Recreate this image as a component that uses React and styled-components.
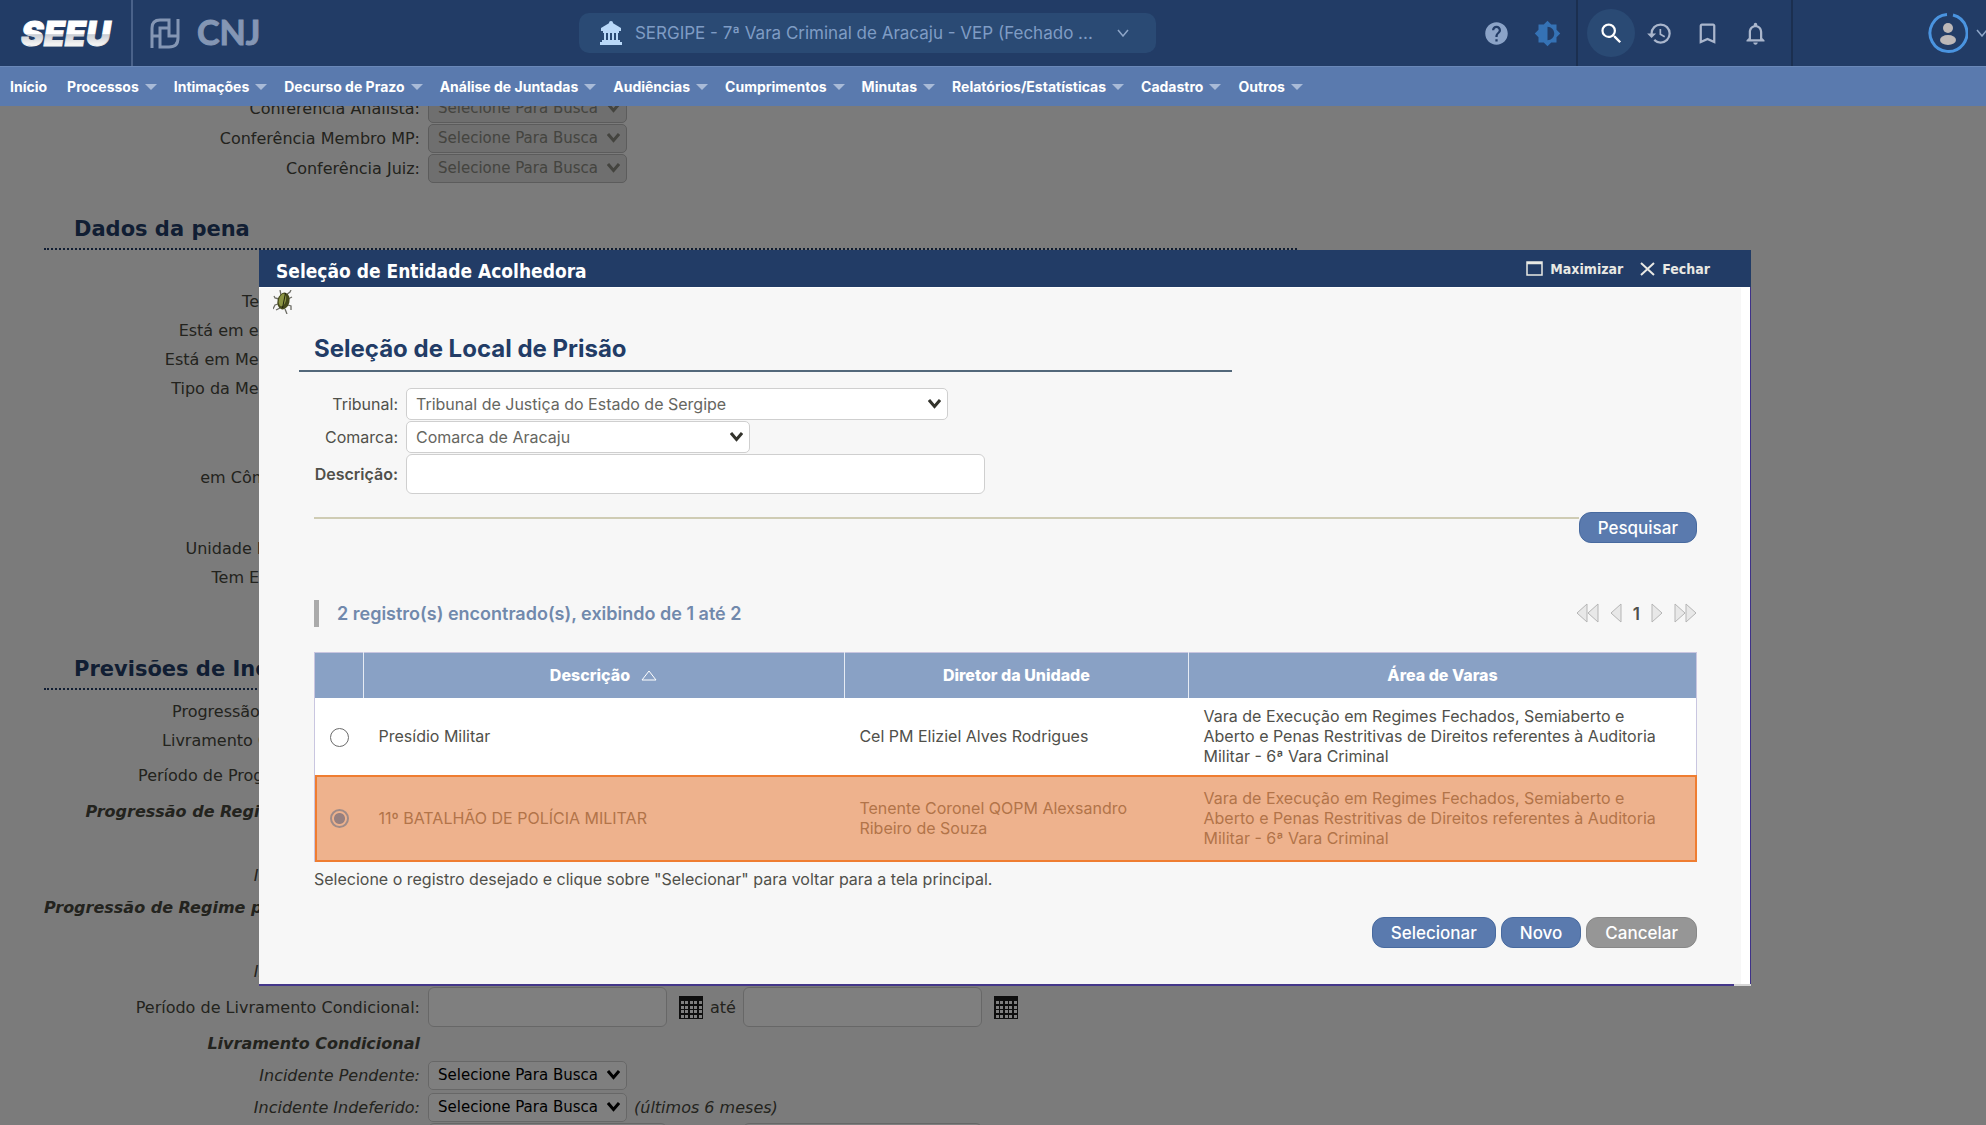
import React from "react"
import styled, { createGlobalStyle } from "styled-components"
import { MdHelp, MdBrightness6, MdSearch, MdHistory, MdBookmarkBorder, MdNotificationsNone } from "react-icons/md"

const GlobalStyle = createGlobalStyle`
    *, *::before, *::after { box-sizing: border-box; }
    html, body, #root { height: 100%; }
    body {
        margin: 0;
        overflow: hidden;
        background: #f7f7f7;
        color: #46463c;
        font-family: Verdana, "DejaVu Sans", sans-serif;
        font-size: 16px;
    }
    button { font-family: inherit; cursor: pointer; }
`

/* ---------- top bar ---------- */

const Header = styled.header`
    position: fixed;
    top: 0;
    left: 0;
    right: 0;
    z-index: 3;
    font-family: Inter, sans-serif;
`

const TopBar = styled.div`
    display: flex;
    align-items: stretch;
    justify-content: space-between;
    height: 66px;
    background: #223c66;
    overflow: hidden;
`

const Brand = styled.div`
    display: flex;
    align-items: center;
    width: 29%;
`

const SeeuBox = styled.a`
    display: flex;
    align-items: center;
    align-self: stretch;
    width: 133px;
    padding-left: 20px;
    border-right: 2px solid #4a628a;
`

const CnjBox = styled.a`
    display: flex;
    align-items: center;
    gap: 17px;
    padding-left: 17px;
`

const CourtButton = styled.button`
    display: flex;
    align-items: center;
    align-self: center;
    width: 577px;
    height: 40px;
    margin-left: 3px;
    padding: 0 20px;
    border: 0;
    border-radius: 10px;
    background: #2a4a74;
    color: #7f9cc4;
    font-size: 17px;

    span { margin: 0 24px 0 12px; white-space: nowrap; }
`

const Tools = styled.div`
    display: flex;
    align-items: stretch;
    justify-content: flex-end;
    flex: 1;
`

const ToolGroup = styled.div`
    display: flex;
    align-items: center;
    gap: ${p => p.$gap || 0}px;
    padding: ${p => p.$pad || "0"};
    border-right: 2px solid #1b2f50;
`

const IconButton = styled.button`
    display: flex;
    align-items: center;
    justify-content: center;
    width: 48px;
    height: 48px;
    padding: 0;
    border: 0;
    border-radius: 50%;
    background: ${p => (p.$active ? "#2a4a74" : "transparent")};
    color: ${p => p.$color || "#aab6cc"};
    font-size: 27px;
`

const UserBox = styled.button`
    display: flex;
    align-items: center;
    gap: 8px;
    width: 193px;
    padding: 0 0 0 135px;
    border: 0;
    background: transparent;

    svg { flex: none; }
`

const Menu = styled.nav`
    display: flex;
    align-items: center;
    gap: 17px;
    height: 40px;
    padding: 0 10px;
    background: #5a7aae;
    border-top: 1px solid #6a88b8;
`

const MenuLink = styled.a`
    display: flex;
    align-items: center;
    gap: 6px;
    color: #fff;
    font-size: 14px;
    font-weight: 700;
    text-decoration: none;
    white-space: nowrap;

    &:first-child { margin-right: 3px; }
`

const Caret = styled.span`
    border: 6px solid transparent;
    border-top-color: #a9bbd8;
    border-bottom: 0;
`

/* ---------- page form ---------- */

const Page = styled.main`
    padding: 93px 44px 0;
`

const SectionTitle = styled.h2`
    width: 66%;
    margin: ${p => p.$space};
    padding: 0 0 2px 30px;
    border-bottom: 2px dotted #223c66;
    color: #223c66;
    font-size: 21px;
    line-height: 34px;
`

const FormRow = styled.div`
    display: grid;
    grid-template-columns: 376px 1fr;
    align-items: center;
    column-gap: 8px;
    height: ${p => p.$height || 29}px;
    margin-top: ${p => p.$top || 0}px;
    font-style: ${p => (p.$italic ? "italic" : "normal")};
`

const FormLabel = styled.label`
    text-align: right;
    white-space: nowrap;
`

const Subtitle = styled.strong`
    text-align: right;
    white-space: nowrap;
`

const Controls = styled.div`
    display: flex;
    align-items: center;
    gap: 7px;
    font-size: 16px;
`

const SelectBox = styled.span`
    position: relative;
    display: inline-flex;
    width: ${p => p.$width || 199}px;

    svg {
        position: absolute;
        top: 50%;
        right: 7px;
        margin-top: -5px;
        color: ${p => (p.$disabled ? "#88887e" : p.$ink || "#000")};
        pointer-events: none;
    }
`

const SmallSelect = styled.select`
    appearance: none;
    width: 100%;
    height: 29px;
    padding: 0 9px;
    border: 1px solid #cfcfcf;
    border-radius: 5px;
    background: #fff;
    color: #000;
    font-family: Verdana, "DejaVu Sans", sans-serif;
    font-size: 15px;
    opacity: 1;

    &:disabled { background: #dedede; border-color: #b8b8b8; color: #88887e; }
`

const DateInput = styled.input`
    width: 239px;
    height: 40px;
    border: 1px solid #cfcfcf;
    border-radius: 6px;
    background: #fff;
`

const DateButton = styled.button`
    display: flex;
    padding: 0 0 0 5px;
    border: 0;
    background: transparent;
`

const Overlay = styled.div`
    position: fixed;
    inset: 0;
    z-index: 2;
    background: rgba(0, 0, 0, 0.5);
`

/* ---------- dialog ---------- */

const Dialog = styled.section`
    position: fixed;
    top: 250px;
    left: 259px;
    right: 235px;
    z-index: 4;
    background: #fff;
    color: #50504a;
    font-family: Inter, sans-serif;
    font-size: 16px;
`

const TitleBar = styled.div`
    display: flex;
    align-items: center;
    justify-content: space-between;
    height: 37px;
    padding: 0 41px 0 17px;
    background: #223c66;
    color: #fff;
    font-family: "DejaVu Sans Condensed", "DejaVu Sans", sans-serif;

    h1 { margin: 5px 0 0; font-size: 19px; font-weight: 700; }
`

const WindowActions = styled.div`
    display: flex;
    gap: 17px;

    button {
        display: flex;
        align-items: center;
        gap: 7px;
        padding: 0;
        border: 0;
        background: transparent;
        color: #e9e9e4;
        font-size: 14px;
        font-weight: 700;
    }
`

const Frame = styled.div`
    padding-right: 9px;
    border-right: 1px solid #3f3188;
    border-bottom: 2px solid #44378a;
`

const Body = styled.div`
    padding: 2px 44px 36px 14px;
    border-top: 1px solid #fff;
    background: #f7f7f7;
`

const Corner = styled.span`
    position: absolute;
    right: 0;
    bottom: 0;
    width: 17px;
    height: 2px;
    background: #d6d6d6;
`

const DialogTitle = styled.h2`
    width: 65.5%;
    margin: 14px 0 16px 26px;
    padding: 0 0 4px 15px;
    border-bottom: 2px solid #53687a;
    color: #223c66;
    font-size: 24px;
    font-weight: 700;
    line-height: 34px;
`

const Content = styled.div`
    padding-left: 41px;
`

const SearchForm = styled.form`
    display: grid;
    grid-template-columns: 84px 1fr;
    align-items: center;
    gap: 1px 8px;

    label { text-align: right; }
`

const RequiredLabel = styled.label`
    font-weight: 600;
`

const LargeSelect = styled(SmallSelect)`
    height: 32px;
    color: #66665f;
    font-family: Inter, sans-serif;
    font-size: 16px;
`

const TextInput = styled.input`
    width: 579px;
    height: 40px;
    border: 1px solid #cfcfcf;
    border-radius: 6px;
    background: #fff;
`

const SearchBar = styled.div`
    display: flex;
    margin-top: 18px;
`

const Rule = styled.hr`
    flex: 1;
    height: 2px;
    margin: 5px 0 0;
    border: 0;
    background: #cfccb4;
`

const Button = styled.button`
    height: 31px;
    padding: 0 18px;
    border: 1px solid ${p => (p.$muted ? "#888" : "#486a9f")};
    border-radius: 12px;
    background: ${p => (p.$muted ? "#969696" : "#5a7aae")};
    color: #fff;
    font-size: 17px;
    font-weight: 500;
`

const ResultBar = styled.div`
    display: flex;
    align-items: center;
    justify-content: space-between;
    margin: 57px 0 25px;
`

const ResultCount = styled.p`
    margin: 0;
    padding-left: 18px;
    border-left: 5px solid #aaa;
    color: #7189ac;
    font-size: 18px;
    font-weight: 600;
    line-height: 27px;
`

const Pager = styled.div`
    display: flex;
    align-items: center;
    gap: 11px;
    font-size: 17px;
    font-weight: 600;

    button { display: flex; padding: 0; border: 0; background: transparent; }
`

const Table = styled.table`
    width: 100%;
    border-collapse: collapse;
    table-layout: fixed;
    line-height: 20px;
    border: 1px solid #c9c6e0;

    th {
        height: 45px;
        padding: 0;
        border-left: 1px solid #e6ebf4;
        background: #89a1c5;
        color: #fff;
        font-size: 16px;
        font-weight: 800;
    }
    th:first-child { border-left: 0; }
    th svg { margin-left: 10px; }
    td { padding: 0 30px 0 15px; }
    td:first-child { padding: 0; text-align: center; }
`

const ResultRow = styled.tr`
    height: ${p => (p.$selected ? 87 : 77)}px;
    background: ${p => (p.$selected ? "#eeb28d" : "#fff")};
    color: ${p => (p.$selected ? "#b27449" : "#50504a")};
    outline: ${p => (p.$selected ? "2px solid #ef7d31" : "none")};
    outline-offset: -2px;
`

const Radio = styled.input`
    appearance: none;
    width: 19px;
    height: 19px;
    margin: 0;
    border: 1px solid #6b6b6b;
    border-radius: 50%;
    background: #fff;
    vertical-align: middle;

    &:checked {
        border: 2px solid #a08b87;
        background: radial-gradient(circle, #97807f 5px, #eeb28d 6px);
    }
`

const Hint = styled.p`
    margin: 7px 0 0;
    line-height: 20px;
`

const Actions = styled.div`
    display: flex;
    justify-content: flex-end;
    gap: 5px;
    margin-top: 28px;
`

/* ---------- drawings ---------- */

const SeeuLogo = () => (
    <svg width="96" height="40" viewBox="0 0 96 40" role="img" aria-label="SEEU">
        <defs>
            <linearGradient id="seeu" x1="0" y1="0" x2="0" y2="1">
                <stop offset="0.5" stopColor="#ffffff" />
                <stop offset="0.53" stopColor="#c9cdd4" />
                <stop offset="0.75" stopColor="#f2f2f2" />
            </linearGradient>
        </defs>
        <text x="1" y="33" fontFamily="Inter, sans-serif" fontSize="34" fontWeight="900" fontStyle="italic"
            fill="url(#seeu)" stroke="url(#seeu)" strokeWidth="1">SEEU</text>
    </svg>
)

const CnjMark = () => (
    <svg width="30" height="31" viewBox="0 0 30 31" fill="none" stroke="#8496b4" strokeWidth="3">
        <path d="M2 30V10Q2 2 10 2H19V18H28" />
        <path d="M2 18H10M19 10H10V29H19Q28 29 28 20V1" />
    </svg>
)

const CnjText = () => (
    <svg width="70" height="46" viewBox="0 0 70 46" role="img" aria-label="CNJ">
        <text x="0" y="35" fontFamily="Lato, sans-serif" fontSize="34" fontWeight="700" fill="#8496b4"
            stroke="#8496b4" strokeWidth="1">CNJ</text>
    </svg>
)

const CourtIcon = () => (
    <svg width="24" height="24" viewBox="0 0 24 24" fill="#b9d8f8">
        <path d="M12 1L22 7V10H2V7Z" />
        <path d="M4 10H20V12H4ZM5 12H7V20H5ZM9 12H11V20H9ZM13 12H15V20H13ZM17 12H19V20H17ZM3 19H21V21H3ZM1 21H23V24H1Z" />
        <circle cx="12" cy="2" r="2" />
    </svg>
)

const Chevron = () => (
    <svg width="12" height="8" viewBox="0 0 12 8" fill="none" stroke="#8ea6c8" strokeWidth="1.5">
        <path d="M1 1L6 7L11 1" />
    </svg>
)

const SelectArrow = () => (
    <svg width="13" height="10" viewBox="0 0 13 10" fill="none" stroke="currentColor" strokeWidth="3">
        <path d="M1 1L6.500 7.500L12 1" />
    </svg>
)

const UserIcon = () => (
    <svg width="40" height="40" viewBox="0 0 40 40">
        <path d="M25 2A18.500 18.500 0 1 1 19 1.500" fill="none" stroke="#4a94e0" strokeWidth="3" />
        <circle cx="20" cy="15" r="5" fill="#bdb8b8" />
        <ellipse cx="20" cy="27" rx="8" ry="5" fill="#bdb8b8" />
    </svg>
)

const CalendarIcon = () => (
    <svg width="24" height="23" viewBox="0 0 24 23">
        <rect width="24" height="23" fill="#1c1c1c" />
        {[5, 10, 14, 19].map(y =>
            [2, 6, 11, 15, 20].map(x => <rect key={`${x}-${y}`} x={x} y={y} width="3" height="3" fill="#fff" />)
        )}
    </svg>
)

const BugIcon = () => (
    <svg width="20" height="24" viewBox="0 0 20 24" fill="none">
        <path d="M8 5L7 0M13 5L17 2L18 0M6 9L2 8L1 6M15 9L19 7M5 14L2 15L0 19M15 15L18 16L18 20M12 19L14 24M7 18L3 20"
            stroke="#6d6d66" strokeWidth="1.3" />
        <ellipse cx="10.500" cy="11" rx="6" ry="8.500" transform="rotate(14 10.500 11)" fill="#45491c" />
        <ellipse cx="9.500" cy="10" rx="3.500" ry="6.500" transform="rotate(14 9.500 10)" fill="#8b9443" />
        <path d="M12.500 3L9.500 18" stroke="#20230c" />
    </svg>
)

const Arrows = ({ count = 1, flip }) => (
    <svg width={count * 11 + 1} height="22" viewBox={`0 0 ${count * 11 + 1} 22`} fill="#e8e8e8" stroke="#b5b5b5">
        {[...Array(count)].map((_, i) => (
            <path key={i} d={flip ? `M${i * 11 + 1} 1V19L${i * 11 + 11} 10Z` : `M${i * 11 + 11} 1V19L${i * 11 + 1} 10Z`} />
        ))}
    </svg>
)

/* ---------- data ---------- */

const menu = ["Processos", "Intimações", "Decurso de Prazo", "Análise de Juntadas", "Audiências", "Cumprimentos",
    "Minutas", "Relatórios/Estatísticas", "Cadastro", "Outros"]

const area = "Vara de Execução em Regimes Fechados, Semiaberto e Aberto e Penas Restritivas de Direitos referentes à Auditoria Militar - 6ª Vara Criminal"

const results = [
    { name: "Presídio Militar", director: "Cel PM Eliziel Alves Rodrigues", area },
    { name: "11º BATALHÃO DE POLÍCIA MILITAR", director: "Tenente Coronel QOPM Alexsandro Ribeiro de Souza", area },
]

/* ---------- pieces ---------- */

const SelectRow = ({ id, label, disabled, top, height, italic, note }) => (
    <FormRow $top={top} $height={height} $italic={italic}>
        <FormLabel htmlFor={id}>{label}</FormLabel>
        <Controls>
            <SelectBox $disabled={disabled}>
                <SmallSelect id={id} disabled={disabled}>
                    <option>Selecione Para Busca</option>
                </SmallSelect>
                <SelectArrow />
            </SelectBox>
            {note}
        </Controls>
    </FormRow>
)

const PeriodRow = ({ id, label }) => (
    <FormRow $height={40}>
        <FormLabel htmlFor={id}>{label}</FormLabel>
        <Controls>
            <DateInput id={id} type="text" />
            <DateButton type="button" aria-label="Data inicial"><CalendarIcon /></DateButton>
            <span>até</span>
            <DateInput type="text" aria-label="Data final" />
            <DateButton type="button" aria-label="Data final"><CalendarIcon /></DateButton>
        </Controls>
    </FormRow>
)

const Incidents = ({ id, title }) => (
    <>
        <FormRow $height={32} $italic><Subtitle>{title}</Subtitle></FormRow>
        <SelectRow id={`${id}-pendente`} label="Incidente Pendente:" height={32} italic />
        <SelectRow id={`${id}-indeferido`} label="Incidente Indeferido:" height={32} italic note="(últimos 6 meses)" />
    </>
)

const App = () => (
    <>
        <GlobalStyle />
        <Header>
            <TopBar>
                <Brand>
                    <SeeuBox href="#"><SeeuLogo /></SeeuBox>
                    <CnjBox href="#"><CnjMark /><CnjText /></CnjBox>
                </Brand>
                <CourtButton type="button">
                    <CourtIcon />
                    <span>SERGIPE - 7ª Vara Criminal de Aracaju - VEP (Fechado ...</span>
                    <Chevron />
                </CourtButton>
                <Tools>
                    <ToolGroup $gap={3} $pad="0 5px 0 0">
                        <IconButton aria-label="Ajuda" $color="#8ba3c7"><MdHelp /></IconButton>
                        <IconButton aria-label="Contraste" $color="#3572b5"><MdBrightness6 /></IconButton>
                    </ToolGroup>
                    <ToolGroup $pad="0 12px 0 9px">
                        <IconButton aria-label="Pesquisar" $active $color="#fff"><MdSearch /></IconButton>
                        <IconButton aria-label="Histórico"><MdHistory /></IconButton>
                        <IconButton aria-label="Favoritos"><MdBookmarkBorder /></IconButton>
                        <IconButton aria-label="Notificações"><MdNotificationsNone /></IconButton>
                    </ToolGroup>
                    <UserBox type="button" aria-label="Usuário"><UserIcon /><Chevron /></UserBox>
                </Tools>
            </TopBar>
            <Menu>
                <MenuLink href="#">Início</MenuLink>
                {menu.map(item => <MenuLink key={item} href="#">{item}<Caret /></MenuLink>)}
            </Menu>
        </Header>

        <Page>
            <SelectRow id="analista" label="Conferência Analista:" height={30} disabled />
            <SelectRow id="membro" label="Conferência Membro MP:" height={30} disabled />
            <SelectRow id="juiz" label="Conferência Juiz:" height={30} disabled />

            <SectionTitle $space="29px 0 37px">Dados da pena</SectionTitle>
            <SelectRow id="tempo" label="Termo Remanescente:" />
            <SelectRow id="execucao" label="Está em execução da medida:" />
            <SelectRow id="medida" label="Está em Medida Socioeducativa" />
            <SelectRow id="tipo" label="Tipo da Medida Socioeducativa" />
            <SelectRow id="computo" label="em Cômputo de Pena Final:" top={60} />
            <SelectRow id="unidade" label="Unidade Prisional do Regime:" top={42} />
            <SelectRow id="extincao" label="Tem Extinção de Medidas:" />

            <SectionTitle $space="60px 0 7px">Previsões de Incidentes</SectionTitle>
            <SelectRow id="progressao" label="Progressão de Regime prevista" />
            <SelectRow id="livramento" label="Livramento Condicional a partir:" />
            <PeriodRow id="periodo-progressao" label="Período de Progressão de Regimes:" />
            <Incidents id="regime" title="Progressão de Regime de Pena Base:" />
            <Incidents id="regime-pena" title="Progressão de Regime por Incidente Novo" />
            <PeriodRow id="periodo-livramento" label="Período de Livramento Condicional:" />
            <Incidents id="condicional" title="Livramento Condicional" />
            <PeriodRow id="periodo-termino" />
        </Page>

        <Overlay />

        <Dialog role="dialog" aria-labelledby="dialog-title">
            <TitleBar>
                <h1 id="dialog-title">Seleção de Entidade Acolhedora</h1>
                <WindowActions>
                    <button type="button">
                        <svg width="17" height="15" viewBox="0 0 17 15" fill="none" stroke="currentColor">
                            <path d="M1 1H16V14H1ZM1 2.500H16" strokeWidth="1.5" />
                        </svg>
                        Maximizar
                    </button>
                    <button type="button">
                        <svg width="15" height="14" viewBox="0 0 15 14" fill="none" stroke="currentColor" strokeWidth="2">
                            <path d="M1 1L14 13M14 1L1 13" />
                        </svg>
                        Fechar
                    </button>
                </WindowActions>
            </TitleBar>
            <Frame>
                <Body>
                    <BugIcon />
                    <DialogTitle>Seleção de Local de Prisão</DialogTitle>
                    <Content>
                        <SearchForm>
                            <label htmlFor="tribunal">Tribunal:</label>
                            <SelectBox $width={542} $ink="#33332c">
                                <LargeSelect id="tribunal"><option>Tribunal de Justiça do Estado de Sergipe</option></LargeSelect>
                                <SelectArrow />
                            </SelectBox>
                            <label htmlFor="comarca">Comarca:</label>
                            <SelectBox $width={344} $ink="#33332c">
                                <LargeSelect id="comarca"><option>Comarca de Aracaju</option></LargeSelect>
                                <SelectArrow />
                            </SelectBox>
                            <RequiredLabel htmlFor="descricao">Descrição:</RequiredLabel>
                            <TextInput id="descricao" type="text" />
                        </SearchForm>
                        <SearchBar>
                            <Rule />
                            <Button type="button">Pesquisar</Button>
                        </SearchBar>

                        <ResultBar>
                            <ResultCount>2 registro(s) encontrado(s), exibindo de 1 até 2</ResultCount>
                            <Pager>
                                <button type="button" aria-label="Primeira"><Arrows count={2} /></button>
                                <button type="button" aria-label="Anterior"><Arrows /></button>
                                <span>1</span>
                                <button type="button" aria-label="Próxima"><Arrows flip /></button>
                                <button type="button" aria-label="Última"><Arrows count={2} flip /></button>
                            </Pager>
                        </ResultBar>
                        <Table>
                            <colgroup>
                                <col width="49" />
                                <col width="34.8%" />
                                <col width="24.9%" />
                                <col />
                            </colgroup>
                            <thead>
                                <tr>
                                    <th aria-label="Seleção" />
                                    <th>
                                        Descrição
                                        <svg width="18" height="11" viewBox="0 0 18 11" fill="none" stroke="#fff">
                                            <path d="M9 1L16 10H2Z" />
                                        </svg>
                                    </th>
                                    <th>Diretor da Unidade</th>
                                    <th>Área de Varas</th>
                                </tr>
                            </thead>
                            <tbody>
                                {results.map((r, i) => (
                                    <ResultRow key={r.name} $selected={i === 1}>
                                        <td><Radio type="radio" name="local" aria-label={r.name} defaultChecked={i === 1} /></td>
                                        <td>{r.name}</td>
                                        <td>{r.director}</td>
                                        <td>{r.area}</td>
                                    </ResultRow>
                                ))}
                            </tbody>
                        </Table>
                        <Hint>Selecione o registro desejado e clique sobre "Selecionar" para voltar para a tela principal.</Hint>
                        <Actions>
                            <Button type="button">Selecionar</Button>
                            <Button type="button">Novo</Button>
                            <Button type="button" $muted>Cancelar</Button>
                        </Actions>
                    </Content>
                </Body>
            </Frame>
            <Corner />
        </Dialog>
    </>
)

export default App
